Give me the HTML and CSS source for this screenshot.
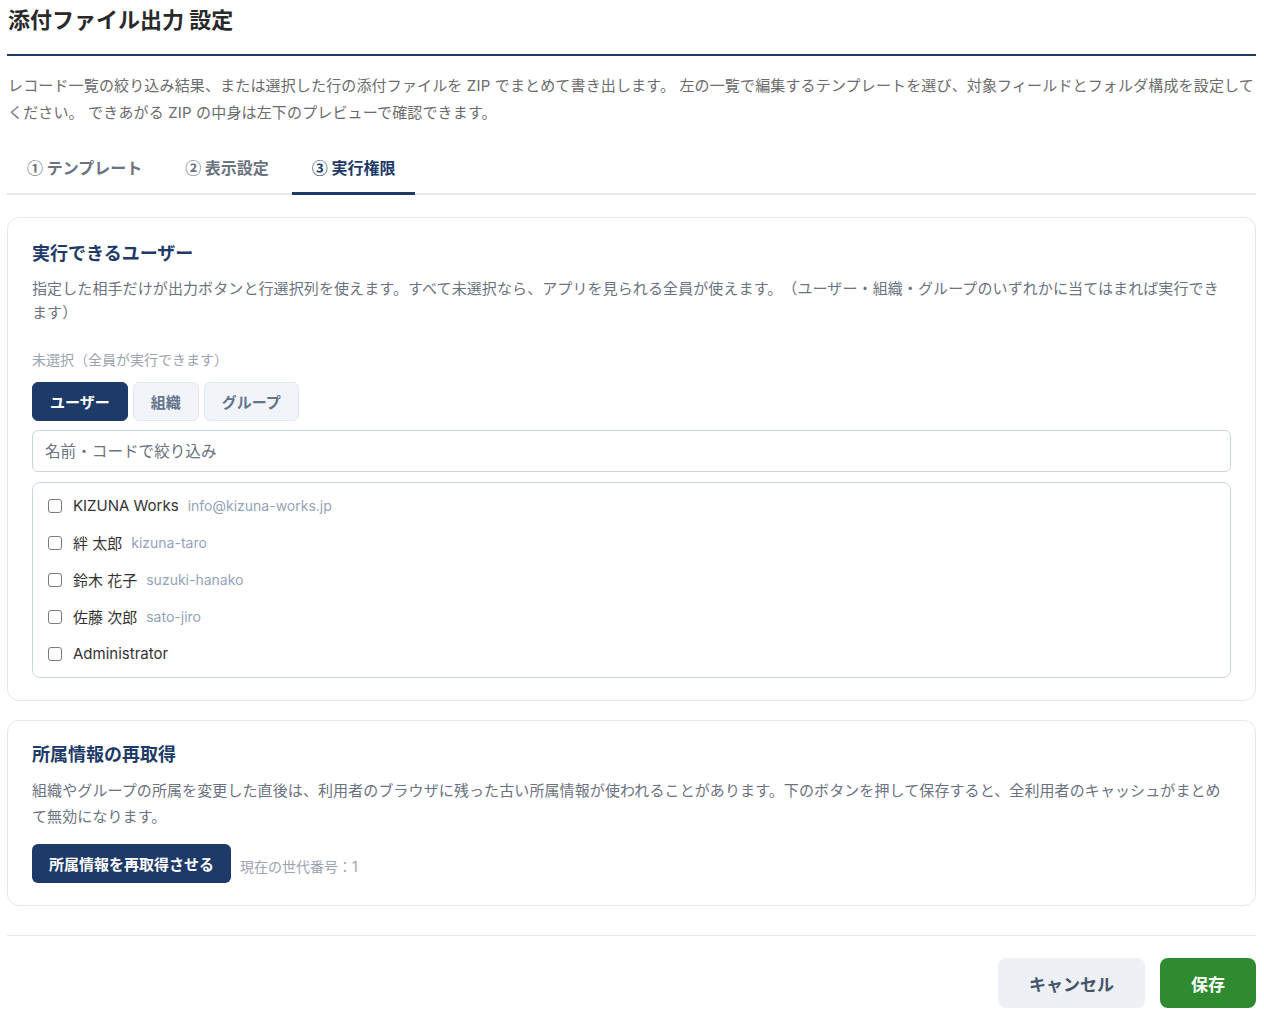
FILE: index.html
```html
<!DOCTYPE html>
<html lang="ja">
<head>
<meta charset="utf-8">
<title>添付ファイル出力 設定</title>
<link rel="stylesheet" href="styles.css">
</head>
<body>
<div class="page">
  <h1 class="title">添付ファイル出力 設定</h1>
  <p class="intro">レコード一覧の絞り込み結果、または選択した行の添付ファイルを ZIP でまとめて書き出します。 左の一覧で編集するテンプレートを選び、対象フィールドとフォルダ構成を設定してください。 できあがる ZIP の中身は左下のプレビューで確認できます。</p>

  <div class="tabs">
    <div class="tab">① テンプレート</div>
    <div class="tab">② 表示設定</div>
    <div class="tab active">③ 実行権限</div>
  </div>

  <section class="card">
    <h2 class="card-title">実行できるユーザー</h2>
    <p class="card-desc">指定した相手だけが出力ボタンと行選択列を使えます。すべて未選択なら、アプリを見られる全員が使えます。（ユーザー・組織・グループのいずれかに当てはまれば実行できます）</p>
    <div class="status">未選択（全員が実行できます）</div>
    <div class="seg">
      <button class="seg-btn on">ユーザー</button>
      <button class="seg-btn">組織</button>
      <button class="seg-btn">グループ</button>
    </div>
    <input class="filter" type="text" placeholder="名前・コードで絞り込み">
    <div class="list">
      <label class="row"><input class="check" type="checkbox"><span class="name">KIZUNA Works</span><span class="code">info@kizuna-works.jp</span></label>
      <label class="row"><input class="check" type="checkbox"><span class="name">絆 太郎</span><span class="code">kizuna-taro</span></label>
      <label class="row"><input class="check" type="checkbox"><span class="name">鈴木 花子</span><span class="code">suzuki-hanako</span></label>
      <label class="row"><input class="check" type="checkbox"><span class="name">佐藤 次郎</span><span class="code">sato-jiro</span></label>
      <label class="row"><input class="check" type="checkbox"><span class="name">Administrator</span></label>
    </div>
  </section>

  <section class="card card2">
    <h2 class="card-title">所属情報の再取得</h2>
    <p class="card-desc desc2">組織やグループの所属を変更した直後は、利用者のブラウザに残った古い所属情報が使われることがあります。下のボタンを押して保存すると、全利用者のキャッシュがまとめて無効になります。</p>
    <div class="refresh">
      <button class="primary">所属情報を再取得させる</button>
      <span class="gen">現在の世代番号：1</span>
    </div>
  </section>

  <footer class="footer">
    <button class="cancel">キャンセル</button>
    <button class="save">保存</button>
  </footer>
</div>
</body>
</html>
```

FILE: styles.css
```css
* { box-sizing: border-box; }
html, body { margin: 0; padding: 0; background: #ffffff; }
body {
  font-family: "Inter", "Noto Sans CJK JP", sans-serif;
  color: #333333;
  text-spacing-trim: space-all;
}
.page {
  margin: 0 8px 0 7px;
  padding-top: 6px;
}
.title {
  margin: 0;
  font-size: 22px;
  line-height: 28px;
  font-weight: 700;
  color: #2a2a2a;
  padding-bottom: 20px;
  padding-left: 1px;
  border-bottom: 2px solid #1e3a68;
}
.intro {
  margin: 16px 0 0;
  padding-left: 1px;
  font-size: 15px;
  line-height: 27px;
  letter-spacing: 0.15px;
  color: #6b6b6b;
}
.tabs {
  display: flex;
  gap: 3px;
  margin-top: 20px;
  border-bottom: 2px solid #e5e7eb;
}
.tab {
  padding: 10px 20px 14px;
  font-family: "Noto Sans CJK JP", sans-serif;
  font-size: 16px;
  line-height: 22px;
  font-weight: 700;
  color: #6b7280;
  margin-bottom: -2px;
  border-bottom: 3px solid transparent;
}
.tab.active {
  color: #1e3a68;
  border-bottom-color: #1e3a68;
}
.card {
  margin-top: 22px;
  border: 1px solid #e5e7eb;
  border-radius: 12px;
  padding: 23px 24px 22px;
}
.card2 {
  margin-top: 19px;
  padding-top: 21px;
}
.card-title {
  margin: 0;
  font-size: 18px;
  line-height: 26px;
  font-weight: 700;
  color: #1e3a68;
}
.card-desc {
  margin: 10px 0 0;
  font-size: 15px;
  line-height: 24px;
  letter-spacing: 0.1px;
  color: #6b7280;
}
.desc2 {
  line-height: 26px;
  margin-top: 10px;
}
.status {
  margin-top: 25px;
  font-size: 14px;
  line-height: 20px;
  color: #9ca3af;
}
.seg {
  display: flex;
  gap: 5px;
  margin-top: 12px;
}
.seg-btn {
  font-family: inherit;
  height: 39px;
  padding: 0 17px;
  font-size: 15px;
  font-weight: 700;
  color: #64748b;
  background: #f1f4f9;
  border: 1px solid #e2e8f0;
  border-radius: 6px;
}
.seg-btn.on {
  background: #1e3a68;
  border-color: #1e3a68;
  color: #ffffff;
}
.filter {
  display: block;
  width: 100%;
  height: 42px;
  margin-top: 9px;
  padding: 0 12px;
  font-family: inherit;
  font-size: 15.6px;
  border: 1px solid #cbd5e1;
  border-radius: 6px;
  color: #333;
}
.filter::placeholder { color: #6b7280; }
.list {
  margin-top: 10px;
  border: 1px solid #cbd5e1;
  border-radius: 8px;
  padding: 4px 15px 5px;
}
.row {
  display: flex;
  align-items: center;
  height: 37px;
}
.check {
  appearance: none;
  -webkit-appearance: none;
  width: 14px;
  height: 14px;
  margin: 1px 11px 0 0;
  border: 1.5px solid #7a7a7a;
  border-radius: 3px;
  background: #ffffff;
  flex: none;
}
.name {
  font-size: 15px;
  color: #333333;
}
.code {
  margin-left: 9px;
  font-size: 14px;
  color: #94a3b8;
}
.refresh {
  display: flex;
  align-items: center;
  gap: 9px;
  margin-top: 14px;
}
.primary {
  font-family: inherit;
  height: 39px;
  padding: 0 17px;
  font-size: 15px;
  font-weight: 700;
  color: #ffffff;
  background: #1e3a68;
  border: none;
  border-radius: 6px;
}
.gen {
  font-size: 14px;
  color: #9ca3af;
  padding-top: 5px;
}
.footer {
  margin-top: 29px;
  border-top: 1px solid #e5e7eb;
  padding-top: 22px;
  display: flex;
  justify-content: flex-end;
  gap: 15px;
}
.cancel, .save {
  font-family: inherit;
  height: 50px;
  font-size: 17px;
  font-weight: 700;
  border: none;
  border-radius: 8px;
}
.cancel {
  padding: 0 31px;
  background: #edf0f5;
  color: #475569;
}
.save {
  padding: 0 31px;
  background: #2e8b30;
  color: #ffffff;
}
```
